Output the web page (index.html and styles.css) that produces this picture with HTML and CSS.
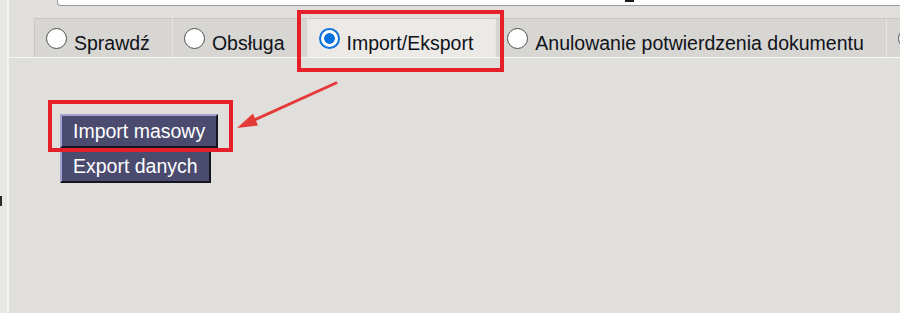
FILE: index.html
```html
<!DOCTYPE html>
<html lang="pl">
<head>
<meta charset="utf-8">
<title>Import/Eksport</title>
<link rel="stylesheet" href="styles.css">
</head>
<body>
<div class="page">
  <div class="side"><span class="side-mark"></span></div>
  <div class="main">
    <div class="topbar">
      <div class="search"><span class="caret"></span></div>
    </div>
    <div class="tabs">
      <label class="tab"><input type="radio" name="t"><span class="tab-label">Sprawdź</span></label>
      <label class="tab"><input type="radio" name="t"><span class="tab-label">Obsługa</span></label>
      <label class="tab tab-active"><input type="radio" name="t" checked><span class="tab-label">Import/Eksport</span></label>
      <label class="tab"><input type="radio" name="t"><span class="tab-label">Anulowanie potwierdzenia dokumentu</span></label>
      <label class="tab"><input type="radio" name="t" aria-label="Więcej"></label>
    </div>
    <div class="panel">
      <div class="actions">
        <button class="btn" type="button">Import masowy</button>
        <button class="btn btn-short" type="button">Export danych</button>
      </div>
    </div>
  </div>
</div>
<div class="mark mark-tab"></div>
<div class="mark mark-btn"></div>
<svg class="arrow" width="900" height="313" viewBox="0 0 900 313" aria-hidden="true">
  <line x1="336" y1="83" x2="252" y2="121" stroke="#e53a3a" stroke-width="3" stroke-linecap="round"/>
  <polygon points="237,128 253,113.5 258,125.5" fill="#e53a3a"/>
</svg>
</body>
</html>
```
FILE: styles.css
```css
* { box-sizing: border-box; }
html, body { margin: 0; padding: 0; }
body {
  width: 900px;
  height: 313px;
  overflow: hidden;
  background: #e0dfdb;
  font-family: "Liberation Sans", Arial, sans-serif;
  font-size: 19.5px;
  color: #10121a;
  position: relative;
}
.page {
  display: flex;
  height: 313px;
}
.side {
  width: 9px;
  flex: none;
  background: #e6e8e4;
  border-right: 2px solid #f3f3f0;
  padding-top: 196px;
}
.side-mark {
  display: block;
  width: 2px;
  height: 10px;
  background: #2a2a2a;
}
.main {
  flex: 1;
  display: flex;
  flex-direction: column;
  min-width: 0;
}
.topbar {
  height: 18px;
  padding-left: 48px;
}
.search {
  height: 6px;
  background: #ffffff;
  border-left: 1px solid #9c9c9c;
  border-bottom: 1px solid #9c9c9c;
  border-bottom-left-radius: 4px;
  padding-left: 567px;
}
.caret {
  display: block;
  width: 9px;
  height: 2px;
  background: #1a1a1a;
}
.tabs {
  display: flex;
  height: 39px;
  padding-left: 25px;
  white-space: nowrap;
  overflow: hidden;
}
.tab {
  flex: none;
  display: flex;
  align-items: center;
  height: 39px;
  padding: 0 22px 0 11px;
  background: #d7d6d2;
  border-top: 1px solid #c8c7c3;
  border-left: 1px solid #e6e5e1;
}
.tab:first-child { border-left-color: #c8c7c3; }
.tab-active { background: #ebeae6; }
.tab input {
  -webkit-appearance: none;
  appearance: none;
  width: 21px;
  height: 21px;
  margin: 0 7px 0 0;
  flex: none;
  border: 1.5px solid #4f4f4f;
  border-radius: 50%;
  background: #ffffff;
}
.tab input:checked {
  border: 2.5px solid #0b72dc;
  background: radial-gradient(circle, #0b72dc 0 5px, #ffffff 5.6px);
}
.tab-label {
  margin-top: 10px;
}
.panel {
  flex: 1;
  border-top: 1px solid #f7f7f4;
  padding: 56px 0 0 51px;
}
.actions {
  display: flex;
  flex-direction: column;
  align-items: flex-start;
  gap: 1px;
}
.btn {
  font-family: "Liberation Sans", Arial, sans-serif;
  font-size: 19.5px;
  line-height: 22px;
  color: #ffffff;
  background: #4b4b70;
  height: 34px;
  padding: 0 11px;
  border-style: solid;
  border-width: 2px;
  border-color: #a3a3cf #15151f #15151f #a3a3cf;
  border-radius: 0;
  margin: 0;
}
.mark {
  position: absolute;
  border: 4px solid #e5202a;
  pointer-events: none;
}
.mark-tab {
  left: 297px;
  top: 10px;
  width: 207px;
  height: 62px;
}
.mark-btn {
  left: 48px;
  top: 100px;
  width: 185px;
  height: 52px;
}
.arrow {
  position: absolute;
  left: 0;
  top: 0;
  pointer-events: none;
}
```
